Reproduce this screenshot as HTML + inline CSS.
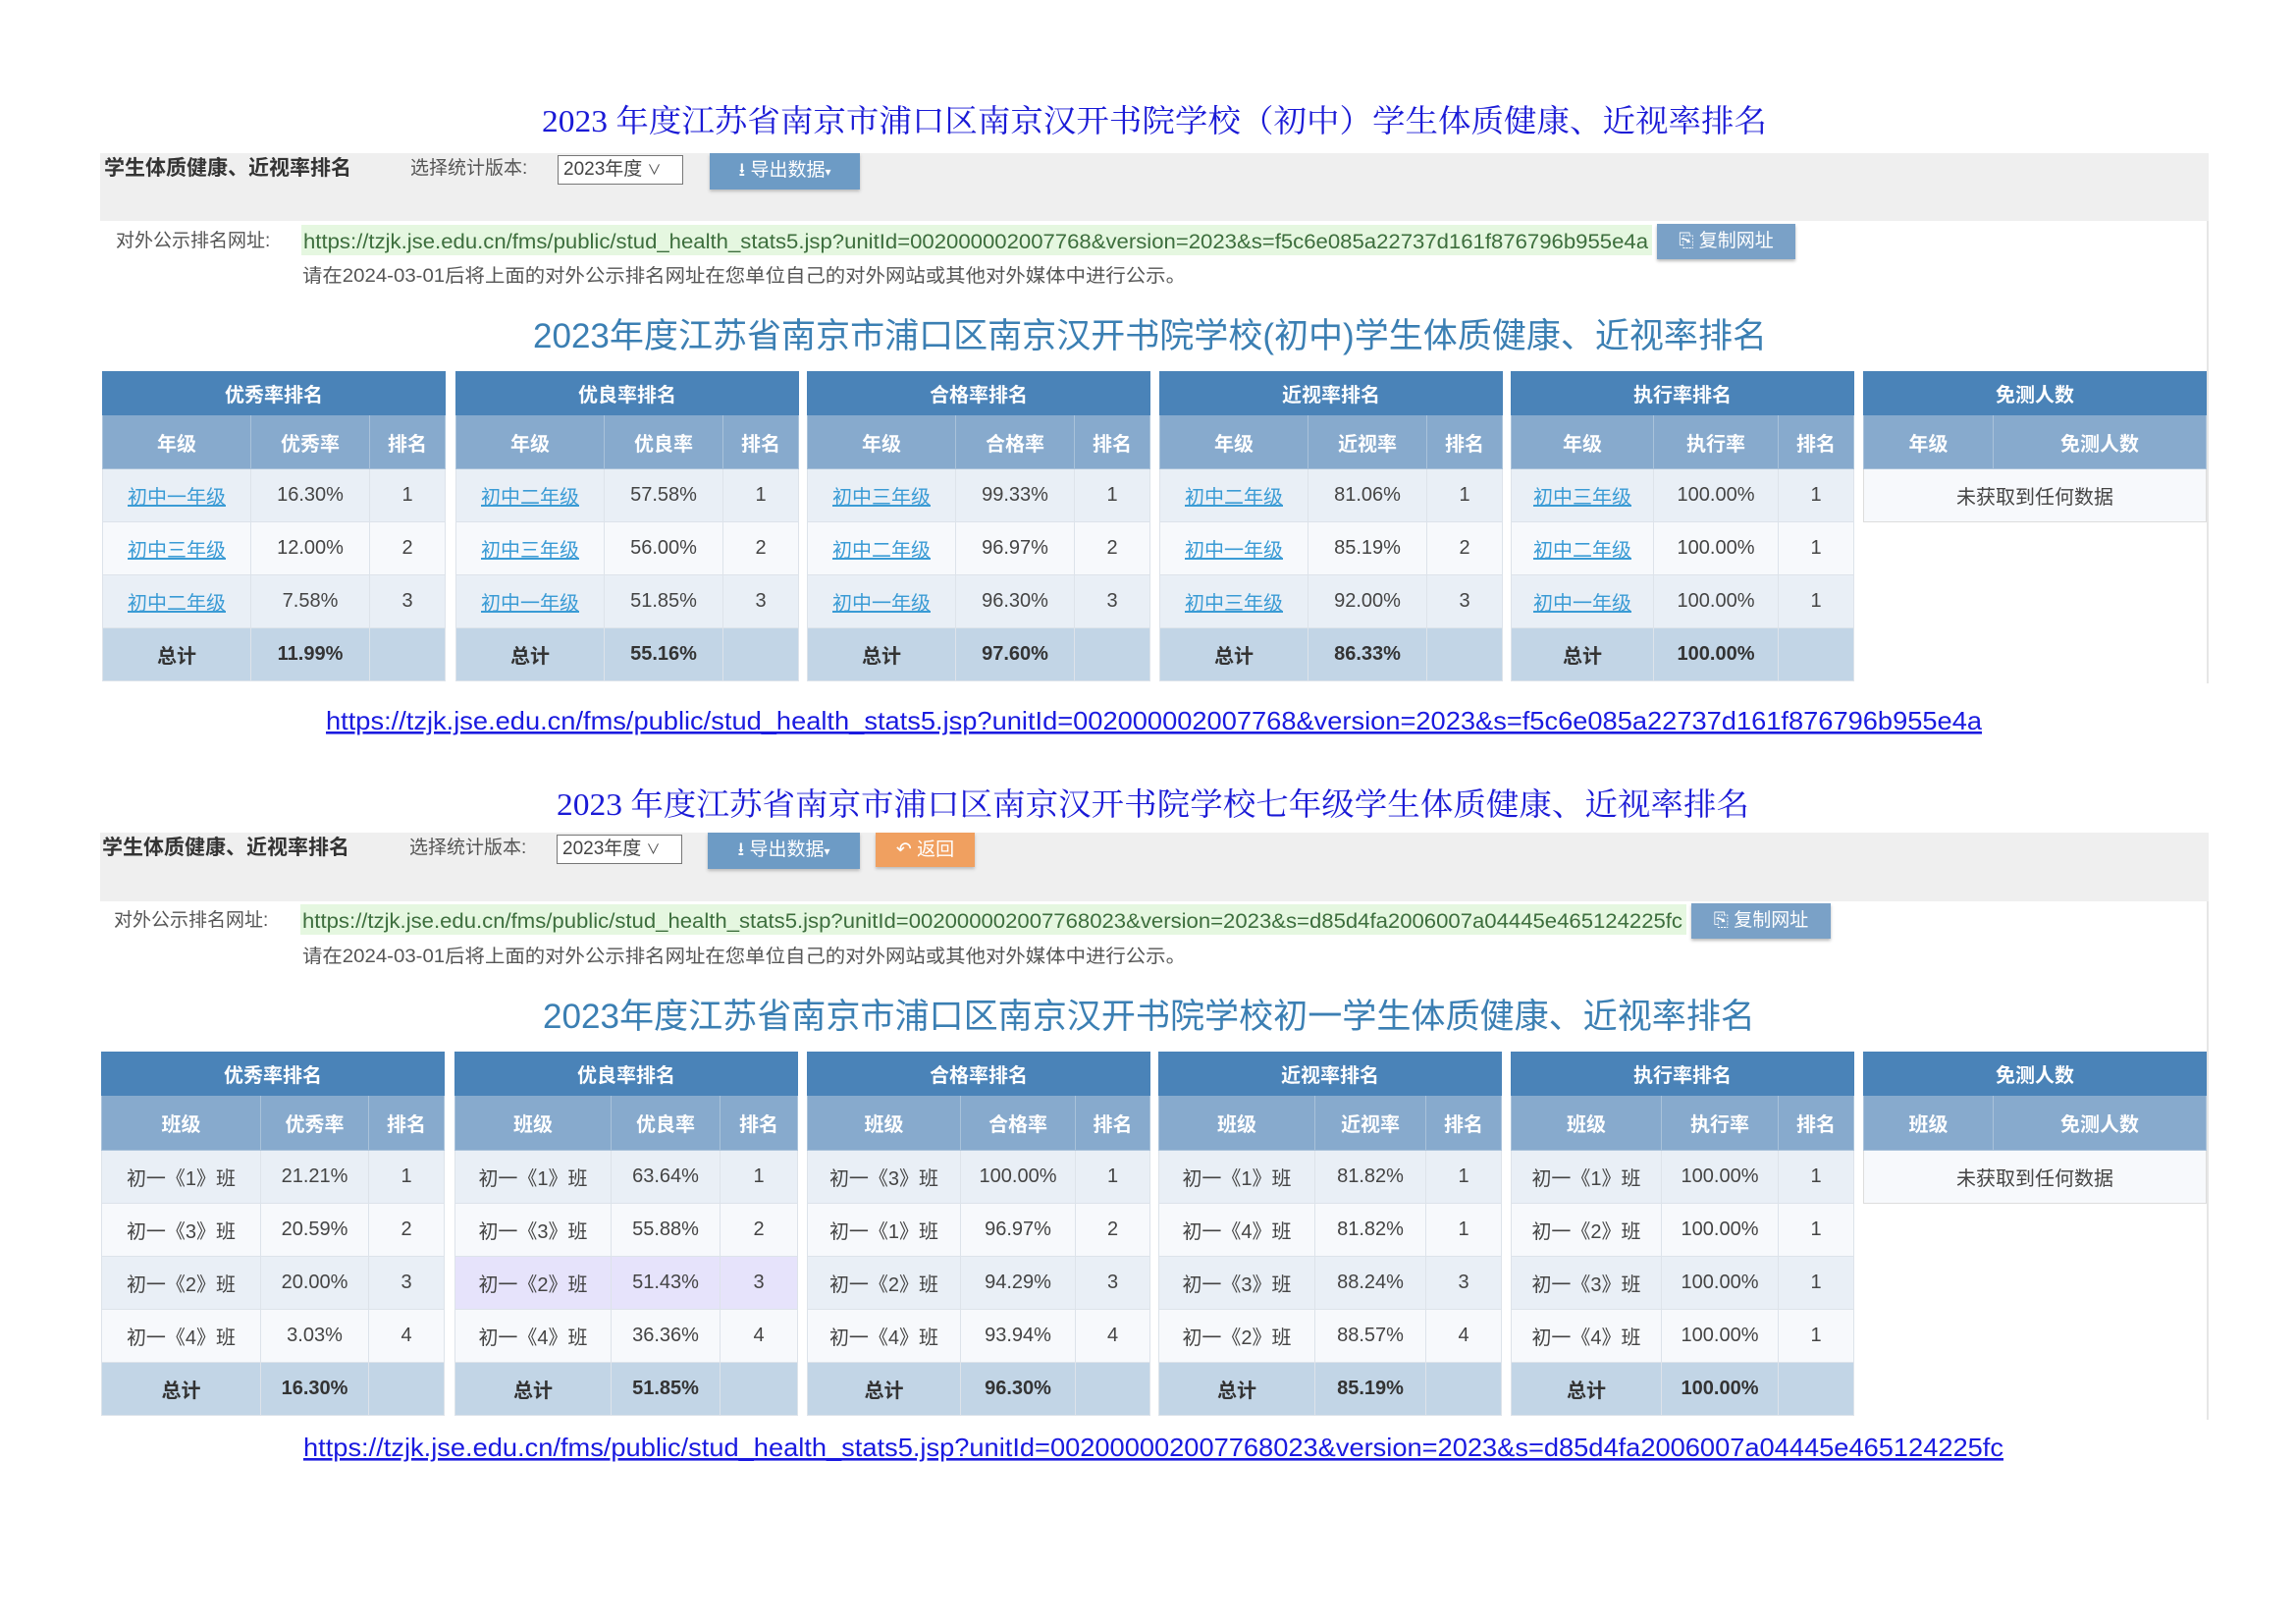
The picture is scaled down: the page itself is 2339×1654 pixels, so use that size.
<!DOCTYPE html>
<html><head><meta charset="utf-8">
<style>
*{margin:0;padding:0;box-sizing:border-box}
body{width:2339px;height:1654px;background:#fff;position:relative;overflow:hidden;font-family:"Liberation Sans","Noto Sans CJK SC",sans-serif;color:#444}
.a{position:absolute}
.panel{position:absolute;left:102px;width:2148px;border-right:2px solid #e6e6e6;background:#fff}
.bar{position:absolute;left:102px;width:2148px;background:#efefef}
.hd{position:absolute;font-size:21px;font-weight:bold;color:#333;line-height:30px}
.lbl{position:absolute;font-size:19px;color:#555;line-height:30px}
.sel{position:absolute;width:128px;height:30px;border:1px solid #777;background:#fff;font-size:19px;line-height:28px;padding-left:5px;color:#444}
.btn{position:absolute;color:#fff;font-size:19px;line-height:35px;text-align:center;box-shadow:0 2px 3px #bbb}
.grn{position:absolute;background:#e5f7e0;height:31px}
svg{position:absolute;overflow:visible}
table{position:absolute;border-collapse:collapse;table-layout:fixed;font-size:20px;width:349px}
td{text-align:center;border:1px solid #dde3ea;color:#444;padding:0;white-space:nowrap}
tr.h td{background:#4a83b8;color:#fff;font-weight:bold;height:44px;border-color:#4a83b8}
tr.s td{background:#87aacd;color:#fff;font-weight:bold;border-color:#a9c2da}
tr.r1 td{background:#e9eff6}
tr.r2 td{background:#f7f9fc}
tr.hl td{background:#e6e3fb}
tr.t td{background:#c2d5e6;font-weight:bold;color:#333}
a.l{color:#3a9bd5;text-decoration:underline}
</style></head><body>

<!-- ========== SECTION 1 ========== -->
<svg width="2339" height="1654" style="left:0;top:0">
<text x="552" y="134" font-family="Liberation Serif,Noto Serif CJK SC,serif" font-size="32" fill="#1a1ad6" textLength="1248" lengthAdjust="spacingAndGlyphs">2023 年度江苏省南京市浦口区南京汉开书院学校（初中）学生体质健康、近视率排名</text>
<text x="567" y="830" font-family="Liberation Serif,Noto Serif CJK SC,serif" font-size="32" fill="#1a1ad6" textLength="1215" lengthAdjust="spacingAndGlyphs">2023 年度江苏省南京市浦口区南京汉开书院学校七年级学生体质健康、近视率排名</text>
</svg>

<div class="panel" style="top:156px;height:540px"></div>
<div class="bar" style="top:156px;height:69px"></div>
<div class="hd" style="left:106px;top:157px">学生体质健康、近视率排名</div>
<div class="lbl" style="left:418px;top:157px">选择统计版本:</div>
<div class="sel" style="left:568px;top:158px">2023年度 <span style="font-size:14px">&#x2228;</span></div>
<div class="btn" style="left:723px;top:156px;width:153px;background:#6d9bc5">&#x2B73; 导出数据<span style="font-size:12px">&#x25BE;</span></div>
<div class="lbl" style="left:118px;top:231px">对外公示排名网址:</div>
<div class="grn" style="left:307px;top:229px;width:1376px"></div>
<svg style="left:0;top:0" width="2339" height="1654">
<text x="309" y="253" font-family="Liberation Sans,sans-serif" font-size="21" fill="#3d6e3d" textLength="1370" lengthAdjust="spacingAndGlyphs">https://tzjk.jse.edu.cn/fms/public/stud_health_stats5.jsp?unitId=002000002007768&amp;version=2023&amp;s=f5c6e085a22737d161f876796b955e4a</text>
<text x="308" y="287" font-family="Liberation Sans,Noto Sans CJK SC,sans-serif" font-size="19" fill="#555" textLength="900" lengthAdjust="spacingAndGlyphs">请在2024-03-01后将上面的对外公示排名网址在您单位自己的对外网站或其他对外媒体中进行公示。</text>
<text x="543" y="354" font-family="Liberation Sans,Noto Sans CJK SC,sans-serif" font-size="35" fill="#3b7fb3" textLength="1257" lengthAdjust="spacingAndGlyphs">2023年度江苏省南京市浦口区南京汉开书院学校(初中)学生体质健康、近视率排名</text>
<text x="332" y="743" font-family="Liberation Sans,sans-serif" font-size="26" fill="#1a1ae0" text-decoration="underline" textLength="1687" lengthAdjust="spacingAndGlyphs">https://tzjk.jse.edu.cn/fms/public/stud_health_stats5.jsp?unitId=002000002007768&amp;version=2023&amp;s=f5c6e085a22737d161f876796b955e4a</text>
</svg>
<div class="btn" style="left:1688px;top:228px;width:141px;height:36px;background:#7aa1c7">&#x2398; 复制网址</div>

<table style="left:104px;top:378px"><col style="width:151px"><col style="width:121px"><col style="width:77px">
<tr class="h"><td colspan="3">优秀率排名</td></tr>
<tr class="s" style="height:55px"><td>年级</td><td>优秀率</td><td>排名</td></tr>
<tr class="r1" style="height:54px"><td><a class="l">初中一年级</a></td><td>16.30%</td><td>1</td></tr>
<tr class="r2" style="height:54px"><td><a class="l">初中三年级</a></td><td>12.00%</td><td>2</td></tr>
<tr class="r1" style="height:54px"><td><a class="l">初中二年级</a></td><td>7.58%</td><td>3</td></tr>
<tr class="t" style="height:54px"><td>总计</td><td>11.99%</td><td></td></tr></table>

<table style="left:464px;top:378px"><col style="width:151px"><col style="width:121px"><col style="width:77px">
<tr class="h"><td colspan="3">优良率排名</td></tr>
<tr class="s" style="height:55px"><td>年级</td><td>优良率</td><td>排名</td></tr>
<tr class="r1" style="height:54px"><td><a class="l">初中二年级</a></td><td>57.58%</td><td>1</td></tr>
<tr class="r2" style="height:54px"><td><a class="l">初中三年级</a></td><td>56.00%</td><td>2</td></tr>
<tr class="r1" style="height:54px"><td><a class="l">初中一年级</a></td><td>51.85%</td><td>3</td></tr>
<tr class="t" style="height:54px"><td>总计</td><td>55.16%</td><td></td></tr></table>

<table style="left:822px;top:378px"><col style="width:151px"><col style="width:121px"><col style="width:77px">
<tr class="h"><td colspan="3">合格率排名</td></tr>
<tr class="s" style="height:55px"><td>年级</td><td>合格率</td><td>排名</td></tr>
<tr class="r1" style="height:54px"><td><a class="l">初中三年级</a></td><td>99.33%</td><td>1</td></tr>
<tr class="r2" style="height:54px"><td><a class="l">初中二年级</a></td><td>96.97%</td><td>2</td></tr>
<tr class="r1" style="height:54px"><td><a class="l">初中一年级</a></td><td>96.30%</td><td>3</td></tr>
<tr class="t" style="height:54px"><td>总计</td><td>97.60%</td><td></td></tr></table>

<table style="left:1181px;top:378px"><col style="width:151px"><col style="width:121px"><col style="width:77px">
<tr class="h"><td colspan="3">近视率排名</td></tr>
<tr class="s" style="height:55px"><td>年级</td><td>近视率</td><td>排名</td></tr>
<tr class="r1" style="height:54px"><td><a class="l">初中二年级</a></td><td>81.06%</td><td>1</td></tr>
<tr class="r2" style="height:54px"><td><a class="l">初中一年级</a></td><td>85.19%</td><td>2</td></tr>
<tr class="r1" style="height:54px"><td><a class="l">初中三年级</a></td><td>92.00%</td><td>3</td></tr>
<tr class="t" style="height:54px"><td>总计</td><td>86.33%</td><td></td></tr></table>

<table style="left:1539px;top:378px"><col style="width:145px"><col style="width:127px"><col style="width:77px">
<tr class="h"><td colspan="3">执行率排名</td></tr>
<tr class="s" style="height:55px"><td>年级</td><td>执行率</td><td>排名</td></tr>
<tr class="r1" style="height:54px"><td><a class="l">初中三年级</a></td><td>100.00%</td><td>1</td></tr>
<tr class="r2" style="height:54px"><td><a class="l">初中二年级</a></td><td>100.00%</td><td>1</td></tr>
<tr class="r1" style="height:54px"><td><a class="l">初中一年级</a></td><td>100.00%</td><td>1</td></tr>
<tr class="t" style="height:54px"><td>总计</td><td>100.00%</td><td></td></tr></table>

<table style="left:1898px;top:378px"><col style="width:132px"><col style="width:217px">
<tr class="h"><td colspan="2">免测人数</td></tr>
<tr class="s" style="height:55px"><td>年级</td><td>免测人数</td></tr>
<tr class="r2" style="height:54px"><td colspan="2" style="border-color:#ddd">未获取到任何数据</td></tr></table>

<!-- ========== SECTION 2 ========== -->
<div class="panel" style="top:848px;height:598px"></div>
<div class="bar" style="top:848px;height:70px"></div>
<div class="hd" style="left:104px;top:849px">学生体质健康、近视率排名</div>
<div class="lbl" style="left:417px;top:849px">选择统计版本:</div>
<div class="sel" style="left:567px;top:850px">2023年度 <span style="font-size:14px">&#x2228;</span></div>
<div class="btn" style="left:721px;top:848px;width:155px;background:#6d9bc5">&#x2B73; 导出数据<span style="font-size:12px">&#x25BE;</span></div>
<div class="btn" style="left:892px;top:848px;width:101px;background:#f0a060">&#x21B6; 返回</div>
<div class="lbl" style="left:116px;top:923px">对外公示排名网址:</div>
<div class="grn" style="left:306px;top:921px;width:1412px"></div>
<svg style="left:0;top:0" width="2339" height="1654">
<text x="308" y="945" font-family="Liberation Sans,sans-serif" font-size="21" fill="#3d6e3d" textLength="1406" lengthAdjust="spacingAndGlyphs">https://tzjk.jse.edu.cn/fms/public/stud_health_stats5.jsp?unitId=002000002007768023&amp;version=2023&amp;s=d85d4fa2006007a04445e465124225fc</text>
<text x="308" y="980" font-family="Liberation Sans,Noto Sans CJK SC,sans-serif" font-size="19" fill="#555" textLength="900" lengthAdjust="spacingAndGlyphs">请在2024-03-01后将上面的对外公示排名网址在您单位自己的对外网站或其他对外媒体中进行公示。</text>
<text x="553" y="1047" font-family="Liberation Sans,Noto Sans CJK SC,sans-serif" font-size="35" fill="#3b7fb3" textLength="1235" lengthAdjust="spacingAndGlyphs">2023年度江苏省南京市浦口区南京汉开书院学校初一学生体质健康、近视率排名</text>
<text x="309" y="1483" font-family="Liberation Sans,sans-serif" font-size="26" fill="#1a1ae0" text-decoration="underline" textLength="1732" lengthAdjust="spacingAndGlyphs">https://tzjk.jse.edu.cn/fms/public/stud_health_stats5.jsp?unitId=002000002007768023&amp;version=2023&amp;s=d85d4fa2006007a04445e465124225fc</text>
</svg>
<div class="btn" style="left:1723px;top:920px;width:142px;height:36px;background:#7aa1c7">&#x2398; 复制网址</div>

<table style="left:103px;top:1071px"><col style="width:162px"><col style="width:110px"><col style="width:77px">
<tr class="h"><td colspan="3">优秀率排名</td></tr>
<tr class="s" style="height:56px"><td>班级</td><td>优秀率</td><td>排名</td></tr>
<tr class="r1" style="height:54px"><td>初一《1》班</td><td>21.21%</td><td>1</td></tr>
<tr class="r2" style="height:54px"><td>初一《3》班</td><td>20.59%</td><td>2</td></tr>
<tr class="r1" style="height:54px"><td>初一《2》班</td><td>20.00%</td><td>3</td></tr>
<tr class="r2" style="height:54px"><td>初一《4》班</td><td>3.03%</td><td>4</td></tr>
<tr class="t" style="height:54px"><td>总计</td><td>16.30%</td><td></td></tr></table>

<table style="left:463px;top:1071px"><col style="width:159px"><col style="width:111px"><col style="width:79px">
<tr class="h"><td colspan="3">优良率排名</td></tr>
<tr class="s" style="height:56px"><td>班级</td><td>优良率</td><td>排名</td></tr>
<tr class="r1" style="height:54px"><td>初一《1》班</td><td>63.64%</td><td>1</td></tr>
<tr class="r2" style="height:54px"><td>初一《3》班</td><td>55.88%</td><td>2</td></tr>
<tr class="hl" style="height:54px"><td>初一《2》班</td><td>51.43%</td><td>3</td></tr>
<tr class="r2" style="height:54px"><td>初一《4》班</td><td>36.36%</td><td>4</td></tr>
<tr class="t" style="height:54px"><td>总计</td><td>51.85%</td><td></td></tr></table>

<table style="left:822px;top:1071px"><col style="width:156px"><col style="width:117px"><col style="width:76px">
<tr class="h"><td colspan="3">合格率排名</td></tr>
<tr class="s" style="height:56px"><td>班级</td><td>合格率</td><td>排名</td></tr>
<tr class="r1" style="height:54px"><td>初一《3》班</td><td>100.00%</td><td>1</td></tr>
<tr class="r2" style="height:54px"><td>初一《1》班</td><td>96.97%</td><td>2</td></tr>
<tr class="r1" style="height:54px"><td>初一《2》班</td><td>94.29%</td><td>3</td></tr>
<tr class="r2" style="height:54px"><td>初一《4》班</td><td>93.94%</td><td>4</td></tr>
<tr class="t" style="height:54px"><td>总计</td><td>96.30%</td><td></td></tr></table>

<table style="left:1180px;top:1071px"><col style="width:159px"><col style="width:113px"><col style="width:77px">
<tr class="h"><td colspan="3">近视率排名</td></tr>
<tr class="s" style="height:56px"><td>班级</td><td>近视率</td><td>排名</td></tr>
<tr class="r1" style="height:54px"><td>初一《1》班</td><td>81.82%</td><td>1</td></tr>
<tr class="r2" style="height:54px"><td>初一《4》班</td><td>81.82%</td><td>1</td></tr>
<tr class="r1" style="height:54px"><td>初一《3》班</td><td>88.24%</td><td>3</td></tr>
<tr class="r2" style="height:54px"><td>初一《2》班</td><td>88.57%</td><td>4</td></tr>
<tr class="t" style="height:54px"><td>总计</td><td>85.19%</td><td></td></tr></table>

<table style="left:1539px;top:1071px"><col style="width:153px"><col style="width:119px"><col style="width:77px">
<tr class="h"><td colspan="3">执行率排名</td></tr>
<tr class="s" style="height:56px"><td>班级</td><td>执行率</td><td>排名</td></tr>
<tr class="r1" style="height:54px"><td>初一《1》班</td><td>100.00%</td><td>1</td></tr>
<tr class="r2" style="height:54px"><td>初一《2》班</td><td>100.00%</td><td>1</td></tr>
<tr class="r1" style="height:54px"><td>初一《3》班</td><td>100.00%</td><td>1</td></tr>
<tr class="r2" style="height:54px"><td>初一《4》班</td><td>100.00%</td><td>1</td></tr>
<tr class="t" style="height:54px"><td>总计</td><td>100.00%</td><td></td></tr></table>

<table style="left:1898px;top:1071px"><col style="width:132px"><col style="width:217px">
<tr class="h"><td colspan="2">免测人数</td></tr>
<tr class="s" style="height:56px"><td>班级</td><td>免测人数</td></tr>
<tr class="r2" style="height:54px"><td colspan="2" style="border-color:#ddd">未获取到任何数据</td></tr></table>

</body></html>
